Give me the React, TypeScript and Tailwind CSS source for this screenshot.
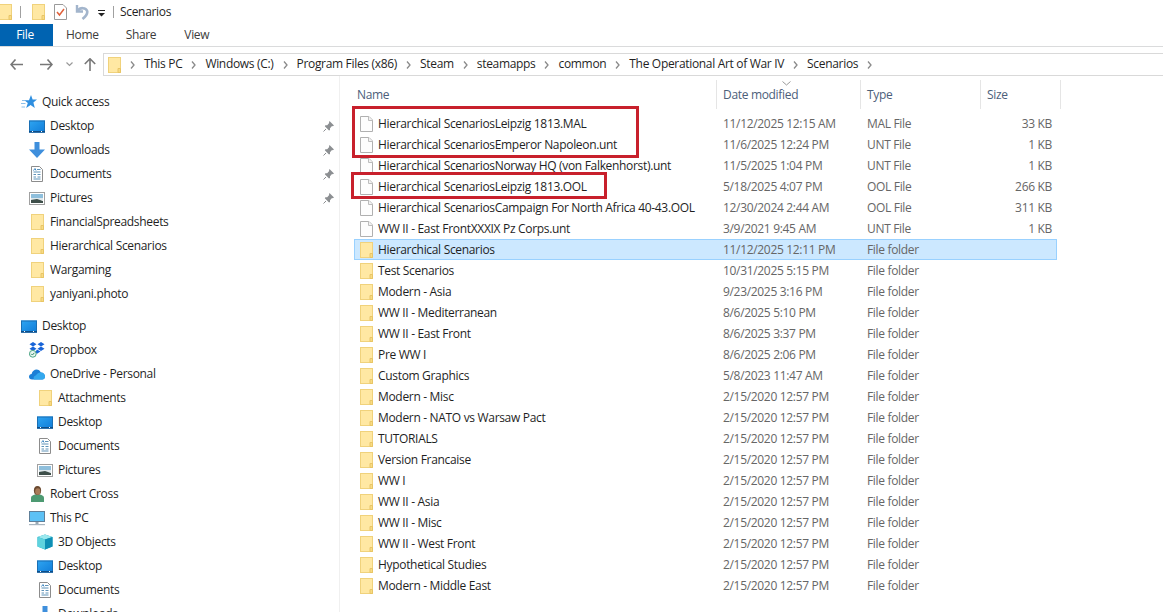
import React from 'react';

const files = [
  { name: 'Hierarchical ScenariosLeipzig 1813.MAL', date: '11/12/2025 12:15 AM', type: 'MAL File', size: '33 KB' },
  { name: 'Hierarchical ScenariosEmperor Napoleon.unt', date: '11/6/2025 12:24 PM', type: 'UNT File', size: '1 KB' },
  { name: 'Hierarchical ScenariosNorway HQ (von Falkenhorst).unt', date: '11/5/2025 1:04 PM', type: 'UNT File', size: '1 KB' },
  { name: 'Hierarchical ScenariosLeipzig 1813.OOL', date: '5/18/2025 4:07 PM', type: 'OOL File', size: '266 KB' },
  { name: 'Hierarchical ScenariosCampaign For North Africa 40-43.OOL', date: '12/30/2024 2:44 AM', type: 'OOL File', size: '311 KB' },
  { name: 'WW II - East FrontXXXIX Pz Corps.unt', date: '3/9/2021 9:45 AM', type: 'UNT File', size: '1 KB' },
];

const folders = [
  { name: 'Hierarchical Scenarios', date: '11/12/2025 12:11 PM', selected: true },
  { name: 'Test Scenarios', date: '10/31/2025 5:15 PM' },
  { name: 'Modern - Asia', date: '9/23/2025 3:16 PM' },
  { name: 'WW II - Mediterranean', date: '8/6/2025 5:10 PM' },
  { name: 'WW II - East Front', date: '8/6/2025 3:37 PM' },
  { name: 'Pre WW I', date: '8/6/2025 2:06 PM' },
  { name: 'Custom Graphics', date: '5/8/2023 11:47 AM' },
  { name: 'Modern - Misc', date: '2/15/2020 12:57 PM' },
  { name: 'Modern - NATO vs Warsaw Pact', date: '2/15/2020 12:57 PM' },
  { name: 'TUTORIALS', date: '2/15/2020 12:57 PM' },
  { name: 'Version Francaise', date: '2/15/2020 12:57 PM' },
  { name: 'WW I', date: '2/15/2020 12:57 PM' },
  { name: 'WW II - Asia', date: '2/15/2020 12:57 PM' },
  { name: 'WW II - Misc', date: '2/15/2020 12:57 PM' },
  { name: 'WW II - West Front', date: '2/15/2020 12:57 PM' },
  { name: 'Hypothetical Studies', date: '2/15/2020 12:57 PM' },
  { name: 'Modern - Middle East', date: '2/15/2020 12:57 PM' },
];

const crumbs = [
  'This PC',
  'Windows (C:)',
  'Program Files (x86)',
  'Steam',
  'steamapps',
  'common',
  'The Operational Art of War IV',
  'Scenarios',
];

function FolderIcon() {
  return (
    <svg width="13" height="16" viewBox="0 0 13 16" className="shrink-0">
      <rect x="0.5" y="0.5" width="12" height="15" fill="#ffe8a3" stroke="#f0d27c" />
      <path d="M10 15.5V11.5H12.5V15.5Z" fill="#f8db83" stroke="#e8c566" />
    </svg>
  );
}

function FileIcon() {
  return (
    <svg width="13" height="16" viewBox="0 0 13 16" className="shrink-0">
      <path d="M0.5 0.5H9L12.5 4V15.5H0.5Z" fill="#fdfdfd" stroke="#b0b0b0" />
      <path d="M8.5 0.5V4.5H12.5" fill="#f2f2f2" stroke="#bdbdbd" />
    </svg>
  );
}

function DesktopIcon() {
  return (
    <svg width="16" height="13" viewBox="0 0 16 13" className="shrink-0">
      <defs>
        <linearGradient id="dk" x1="0" y1="0" x2="1" y2="1">
          <stop offset="0" stopColor="#2fa6f2" />
          <stop offset="1" stopColor="#0f7bd8" />
        </linearGradient>
      </defs>
      <rect width="16" height="12" y="0.5" fill="url(#dk)" />
      <rect x="0.5" y="1" width="15" height="11" fill="none" stroke="#1a6fb4" />
      <rect y="11" width="16" height="1.5" fill="#0f4d86" />
      <rect x="3" y="11" width="1" height="1" fill="#fff" />
      <rect x="12" y="11" width="1" height="1" fill="#fff" />
    </svg>
  );
}

function DocsIcon() {
  return (
    <svg width="12" height="16" viewBox="0 0 12 16" className="shrink-0">
      <path d="M0.5 0.5H8.5L11.5 3.5V15.5H0.5Z" fill="#fff" stroke="#8c8c8c" />
      <path d="M6 3.5H9.5M2.5 6H9.5M2.5 8.5H5M6.5 8.5H9.5M2.5 11H5M6.5 11H9.5M2.5 13H9.5" stroke="#5f93b8" />
      <path d="M2.5 4.5L4 2.5L5 4.5" fill="none" stroke="#3f87c2" />
    </svg>
  );
}

function PicturesIcon() {
  return (
    <svg width="16" height="13" viewBox="0 0 16 13" className="shrink-0">
      <rect x="0.5" y="0.5" width="15" height="12" fill="#fff" stroke="#a0a0a0" />
      <rect x="2" y="2" width="12" height="4" fill="#8fbfdc" />
      <rect x="2" y="6" width="12" height="2" fill="#dfe8ec" />
      <path d="M2 8L8 7L14 9V11H2Z" fill="#3e4f4a" />
    </svg>
  );
}

function DownloadIcon() {
  return (
    <svg width="16" height="16" viewBox="0 0 16 16" className="shrink-0">
      <path d="M5.5 0H10.5V7.5H16L8 16L0 7.5H5.5Z" fill="#3f8fdc" />
    </svg>
  );
}

function StarIcon() {
  return (
    <svg width="16" height="14" viewBox="0 0 16 14" className="shrink-0">
      <path d="M10 0L11.6 4.6H16L12.4 7.6L13.8 13L9.6 10L5.2 13L6.8 8L3.4 5.2H8Z" fill="#2f8fe0" />
      <path d="M1 5.5H4M0 8.5H4.5M0.5 12H4" stroke="#8cc0ea" />
    </svg>
  );
}

function DropboxIcon() {
  return (
    <svg width="16" height="16" viewBox="0 0 16 16" className="shrink-0">
      <path d="M4 0L7.5 2.2L4 4.5L0.5 2.2ZM12 0L15.5 2.2L12 4.5L8.5 2.2ZM4 4.5L7.5 6.8L4 9L0.5 6.8ZM12 4.5L15.5 6.8L12 9L8.5 6.8ZM8 7.5L11.5 9.6L8 11.8L6 10.6Z" fill="#1864d8" />
      <circle cx="3.8" cy="11.8" r="3.4" fill="#e8f5ef" stroke="#4ba383" />
      <path d="M2.2 11.8L3.4 13L5.4 10.8" fill="none" stroke="#2f8a68" />
    </svg>
  );
}

function OneDriveIcon() {
  return (
    <svg width="16" height="11" viewBox="0 0 16 11" className="shrink-0">
      <path d="M3 10.5C1 10.5 0 9 0 7.7C0 6.2 1.2 5 2.6 5C3.2 2 5.4 0.5 7.6 0.5C9.6 0.5 11 1.6 11.8 3.5C14.4 3.5 16 5.6 16 7.6C16 9.4 14.8 10.5 13.2 10.5Z" fill="#1b7fd6" />
      <path d="M5 10.5C4 9 4.8 6.6 7 6.2C8 4.2 10.6 3 11.8 3.5C14.4 3.5 16 5.6 16 7.6C16 9.4 14.8 10.5 13.2 10.5Z" fill="#33a8ee" />
    </svg>
  );
}

function UserIcon() {
  return (
    <svg width="13" height="16" viewBox="0 0 13 16" className="shrink-0">
      <path d="M0 16V11.5C0 10 2 9 4 8.5H9C11 9 13 10 13 11.5V16Z" fill="#4d9a72" />
      <ellipse cx="6.5" cy="4.5" rx="3.6" ry="4.5" fill="#6b4a30" />
      <ellipse cx="6.8" cy="5.5" rx="2.6" ry="3.2" fill="#a87b58" />
    </svg>
  );
}

function MonitorIcon() {
  return (
    <svg width="16" height="15" viewBox="0 0 16 15" className="shrink-0">
      <rect x="0.5" y="0.5" width="15" height="10" fill="#5cc1f5" stroke="#5f7f99" />
      <rect x="6.5" y="11" width="3" height="2" fill="#9aa9b5" />
      <rect y="13" width="16" height="1.2" fill="#a9b6c0" />
    </svg>
  );
}

function CubeIcon() {
  return (
    <svg width="16" height="16" viewBox="0 0 16 16" className="shrink-0">
      <path d="M8 0.5L15.5 3V12.5L8 15.5L0.5 12.5V3Z" fill="#18a6c2" />
      <path d="M0.5 3L8 0.5L15.5 3L8 5.5Z" fill="#9be8ee" />
      <path d="M0.5 3L8 5.5V15.5L0.5 12.5Z" fill="#5fd3de" />
      <path d="M8 5.5L15.5 3V12.5L8 15.5Z" fill="#0f8fb5" />
    </svg>
  );
}

function PinIcon() {
  return (
    <svg width="11" height="11" viewBox="0 0 11 11" className="shrink-0">
      <path d="M6.5 0L11 4.5L9.8 5.3L9 5L7 7.2L7 9L6 9.6L1.8 5.2L2.4 4.2H4.2L6.2 2L6 1.2Z" fill="#8c8f92" />
      <path d="M3 8L0.5 10.5" stroke="#8c8f92" />
    </svg>
  );
}

function SideRow({ icon, label, indent, pin }: { icon: React.ReactNode; label: string; indent: string; pin?: boolean }) {
  return (
    <div className={`h-6 flex items-center ${indent}`}>
      <div className="w-[16px] h-6 flex items-center justify-center shrink-0">{icon}</div>
      <span className="ml-[5px] text-[#1f1f1f] whitespace-nowrap">{label}</span>
      {pin && (
        <span className="ml-auto mr-[4px]">
          <PinIcon />
        </span>
      )}
    </div>
  );
}

function Chevron() {
  return (
    <svg width="5" height="8" viewBox="0 0 5 8" className="shrink-0">
      <path d="M1 0.5L4 4L1 7.5" fill="none" stroke="#8a8a8a" strokeWidth="1.3" />
    </svg>
  );
}

function Row({ icon, name, date, type, size, selected }: { icon: React.ReactNode; name: string; date: string; type: string; size?: string; selected?: boolean }) {
  return (
    <div className={`h-[21px] w-[703px] flex items-center whitespace-nowrap border ${selected ? 'bg-[#cce8ff] border-[#99d1ff]' : 'border-transparent'}`}>
      <div className="w-[23px] pl-[5px] flex items-center shrink-0">{icon}</div>
      <div className="w-[345px] shrink-0 text-[#1f1f1f]">{name}</div>
      <div className="w-[144px] shrink-0 text-[#666]">{date}</div>
      <div className="w-[100px] shrink-0 text-[#666]">{type}</div>
      <div className="w-[85px] shrink-0 text-right text-[#666]">{size}</div>
    </div>
  );
}

export default function App() {
  return (
    <div className="relative h-[612px] w-[1163px] overflow-hidden bg-white text-[12px] font-['Open_Sans',sans-serif] tracking-[-0.32px]">
      {/* title bar */}
      <div className="h-6 flex items-center relative">
        <div className="w-[12px] overflow-hidden flex justify-end shrink-0 mb-[1px]">
          <FolderIcon />
        </div>
        <div className="w-px h-[12px] bg-[#a0a0a0] ml-[8px]" />
        <div className="ml-[11px] mb-[1px]">
          <FolderIcon />
        </div>
        <svg width="13" height="16" viewBox="0 0 13 16" className="ml-[9px] mb-[1px] shrink-0">
          <path d="M0.5 0.5H9L12.5 4V15.5H0.5Z" fill="#fff" stroke="#9a9a9a" />
          <path d="M3 8L5.5 11L10 5" fill="none" stroke="#e0603a" strokeWidth="1.5" />
        </svg>
        <svg width="14" height="16" viewBox="0 0 14 16" className="ml-[8px] mb-[1px] shrink-0">
          <path d="M2 1V7.5H8" fill="none" stroke="#a3b5cc" strokeWidth="2.4" />
          <path d="M2.5 7C5 3.2 11 3.2 12.2 7.2C12.8 10.5 10 13 7.5 15" fill="none" stroke="#a3b5cc" strokeWidth="2.6" />
        </svg>
        <svg width="7" height="7" viewBox="0 0 7 7" className="ml-[9px] mt-[2px] shrink-0">
          <rect y="0" width="7" height="1" fill="#222" />
          <path d="M0 3H7L3.5 6.5Z" fill="#222" />
        </svg>
        <div className="w-px h-[12px] bg-[#a0a0a0] ml-[8px]" />
        <span className="ml-[6px] text-[#1f1f1f]">Scenarios</span>
      </div>

      {/* ribbon tabs */}
      <div className="h-[23px] flex items-center border-b border-[#dadbdc] text-[#3c3c3c]">
        <div className="w-[53px] h-full bg-[#0063b1] text-white flex items-center justify-center font-medium pr-[3px]">File</div>
        <span className="ml-[13px]">Home</span>
        <span className="ml-[27px]">Share</span>
        <span className="ml-[28px]">View</span>
      </div>

      {/* address bar */}
      <div className="h-[29px] flex items-center pt-[6px]">
        <svg width="13" height="11" viewBox="0 0 13 11" className="ml-[10px] shrink-0">
          <path d="M5.5 0.5L1 5.5L5.5 10.5M1 5.5H13" fill="none" stroke="#777" strokeWidth="1.6" />
        </svg>
        <svg width="13" height="11" viewBox="0 0 13 11" className="ml-[17px] shrink-0">
          <path d="M7.5 0.5L12 5.5L7.5 10.5M12 5.5H0" fill="none" stroke="#777" strokeWidth="1.6" />
        </svg>
        <svg width="7" height="5" viewBox="0 0 7 5" className="ml-[13px] shrink-0">
          <path d="M0.5 0.5L3.5 3.5L6.5 0.5" fill="none" stroke="#999" strokeWidth="1.2" />
        </svg>
        <svg width="12" height="13" viewBox="0 0 12 13" className="ml-[11px] shrink-0">
          <path d="M0.8 6L6 0.8L11.2 6M6 1V13" fill="none" stroke="#777" strokeWidth="1.6" />
        </svg>
        <div className="ml-[7px] flex-1 h-[23px] border border-[#d9d9d9] border-r-0 flex items-center pl-[4px] text-[#1f1f1f]">
          <FolderIcon />
          {crumbs.map((c) => (
            <React.Fragment key={c}>
              <span className="ml-[9px] mr-[9px]">
                <Chevron />
              </span>
              <span className="whitespace-nowrap -translate-y-px">{c}</span>
            </React.Fragment>
          ))}
          <span className="ml-[9px]">
            <Chevron />
          </span>
        </div>
      </div>

      <div className="flex">
        {/* nav pane */}
        <div className="w-[340px] shrink-0 border-r border-[#f0f0f0] h-[536px] pt-[14px] pr-[1px] overflow-hidden">
          <SideRow icon={<StarIcon />} label="Quick access" indent="pl-[21px]" />
          <SideRow icon={<DesktopIcon />} label="Desktop" indent="pl-[29px]" pin />
          <SideRow icon={<DownloadIcon />} label="Downloads" indent="pl-[29px]" pin />
          <SideRow icon={<DocsIcon />} label="Documents" indent="pl-[29px]" pin />
          <SideRow icon={<PicturesIcon />} label="Pictures" indent="pl-[29px]" pin />
          <SideRow icon={<FolderIcon />} label="FinancialSpreadsheets" indent="pl-[29px]" />
          <SideRow icon={<FolderIcon />} label="Hierarchical Scenarios" indent="pl-[29px]" />
          <SideRow icon={<FolderIcon />} label="Wargaming" indent="pl-[29px]" />
          <SideRow icon={<FolderIcon />} label="yaniyani.photo" indent="pl-[29px]" />
          <div className="h-[8px]" />
          <SideRow icon={<DesktopIcon />} label="Desktop" indent="pl-[21px]" />
          <SideRow icon={<DropboxIcon />} label="Dropbox" indent="pl-[29px]" />
          <SideRow icon={<OneDriveIcon />} label="OneDrive - Personal" indent="pl-[29px]" />
          <SideRow icon={<FolderIcon />} label="Attachments" indent="pl-[37px]" />
          <SideRow icon={<DesktopIcon />} label="Desktop" indent="pl-[37px]" />
          <SideRow icon={<DocsIcon />} label="Documents" indent="pl-[37px]" />
          <SideRow icon={<PicturesIcon />} label="Pictures" indent="pl-[37px]" />
          <SideRow icon={<UserIcon />} label="Robert Cross" indent="pl-[29px]" />
          <SideRow icon={<MonitorIcon />} label="This PC" indent="pl-[29px]" />
          <SideRow icon={<CubeIcon />} label="3D Objects" indent="pl-[37px]" />
          <SideRow icon={<DesktopIcon />} label="Desktop" indent="pl-[37px]" />
          <SideRow icon={<DocsIcon />} label="Documents" indent="pl-[37px]" />
          <SideRow icon={<DownloadIcon />} label="Downloads" indent="pl-[37px]" />
        </div>

        {/* file list */}
        <div className="flex-1 pl-[14px]">
          <div className="h-[37px] pt-[4px] flex text-[#4c607a] relative">
            <div className="w-[362px] h-[29px] flex items-center pl-[3px]">Name</div>
            <div className="relative w-[144px] h-[29px] flex items-center pl-[6px] border-l border-[#e5e5e5]">
              Date modified
              <svg width="9" height="5" viewBox="0 0 9 5" className="absolute left-[65px] top-[1px]">
                <path d="M0.5 0.5L4.5 4L8.5 0.5" fill="none" stroke="#9a9a9a" />
              </svg>
            </div>
            <div className="w-[120px] h-[29px] flex items-center pl-[6px] border-l border-[#e5e5e5]">Type</div>
            <div className="w-[81px] h-[29px] flex items-center pl-[6px] border-x border-[#e5e5e5]">Size</div>
          </div>
          {files.map((f) => (
            <Row key={f.name} icon={<FileIcon />} name={f.name} date={f.date} type={f.type} size={f.size} />
          ))}
          {folders.map((f) => (
            <Row key={f.name} icon={<FolderIcon />} name={f.name} date={f.date} type="File folder" selected={f.selected} />
          ))}
        </div>
      </div>

      {/* red annotation boxes drawn over the screenshot */}
      <div className="absolute left-[352px] top-[106px] w-[287px] h-[52px] border-[3px] border-[#c8202c]" />
      <div className="absolute left-[351px] top-[172px] w-[256px] h-[27px] border-[3px] border-[#c8202c]" />
    </div>
  );
}
